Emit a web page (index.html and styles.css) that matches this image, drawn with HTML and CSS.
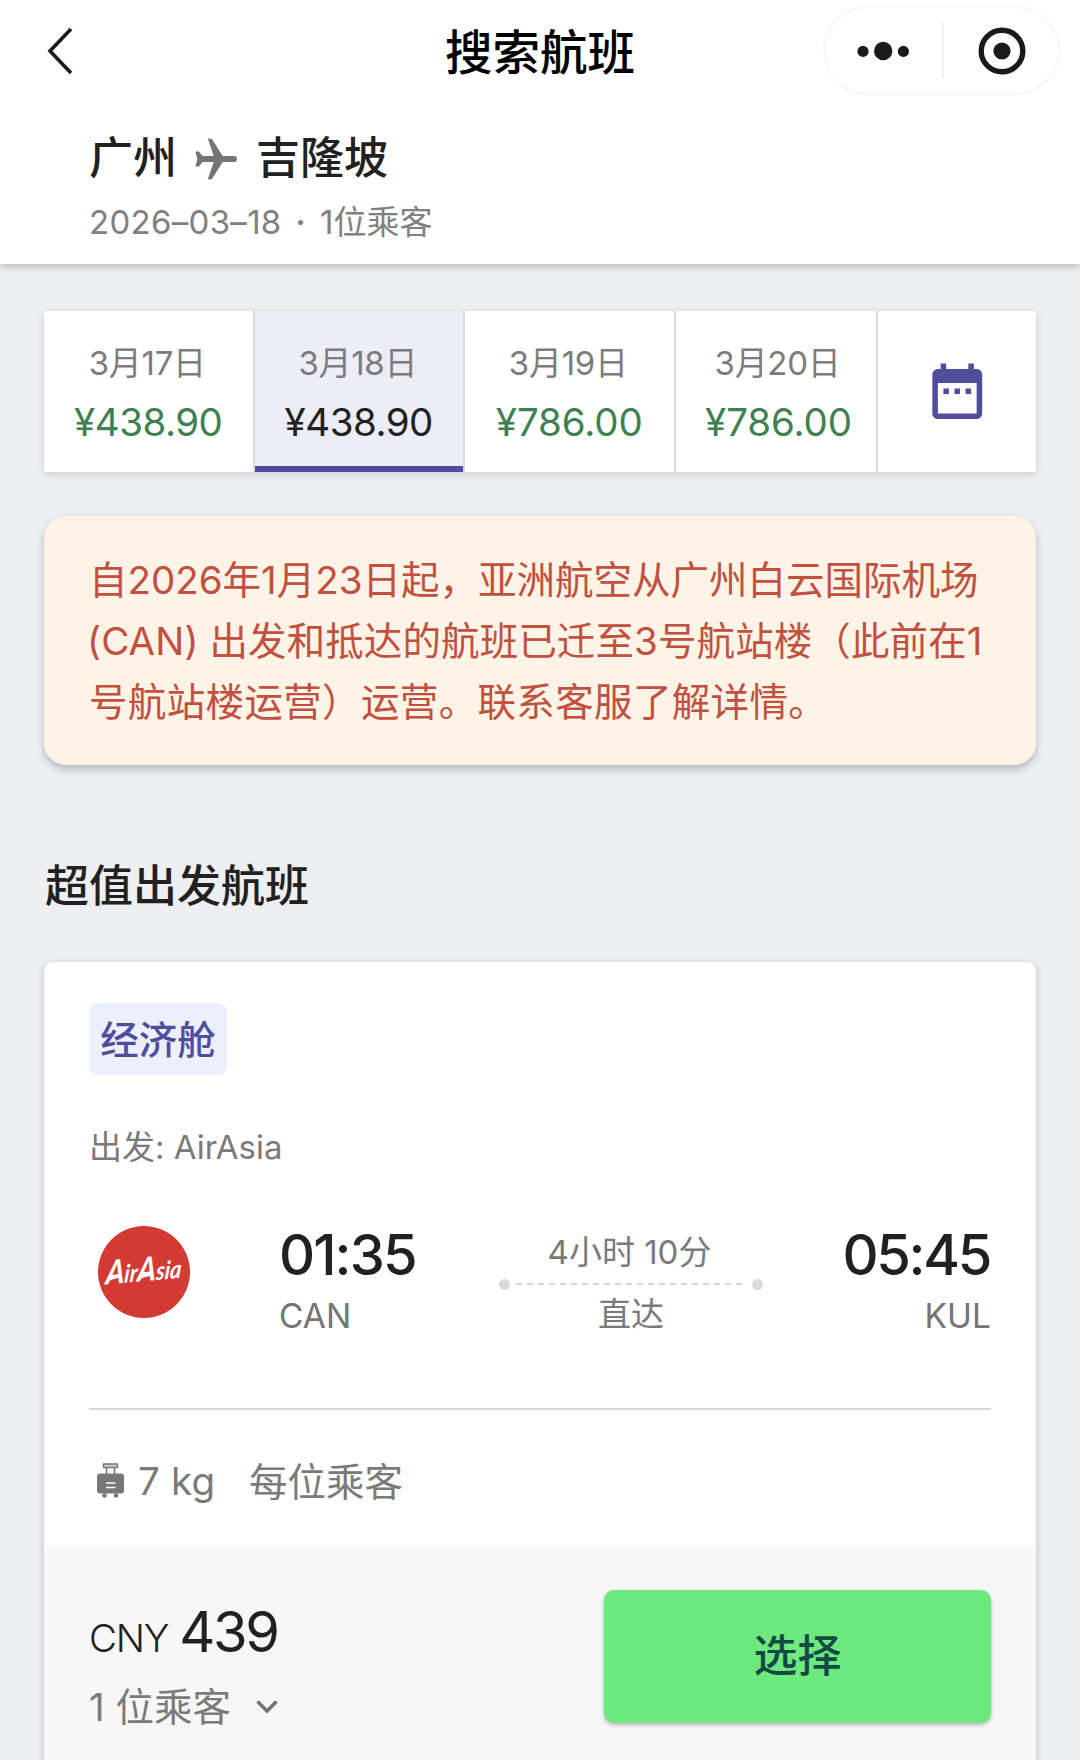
FILE: index.html
```html
<!DOCTYPE html>
<html lang="zh-CN">
<head>
<meta charset="utf-8">
<title>搜索航班</title>
<link rel="stylesheet" href="styles.css">
</head>
<body>
<header class="header">
  <div class="nav">
    <svg class="back" viewBox="0 0 26 48"><path d="M24 2 3 24l21 22" fill="none" stroke="#1a1a1a" stroke-width="3.6"/></svg>
    <h1 class="nav-title">搜索航班</h1>
    <div class="capsule">
      <svg class="more" viewBox="0 0 54 20"><circle cx="7" cy="10.4" r="5.6"/><circle cx="27.200" cy="10" r="9.200"/><circle cx="47.400" cy="10.400" r="5.600"/></svg>
      <i class="capsule-line"></i>
      <svg class="target" viewBox="0 0 48 48"><circle cx="24" cy="24" r="20.800" fill="none" stroke="#1a1a1a" stroke-width="5.400"/><circle cx="24" cy="24" r="8.600"/></svg>
    </div>
  </div>
  <div class="route">
    <span>广州</span>
    <svg class="plane" viewBox="2 2 20 20"><path d="M20.600 10.600H15.200L10 2.400 8.100 2.200 10.900 10.600H5.600L3.900 8.400H2.200L3.100 12 2.200 15.600H3.900L5.600 13.400H10.900L8.100 21.800 10 21.600 15.200 13.400H20.600a1.400 1.400 0 0 0 0-2.800z"/></svg>
    <span>吉隆坡</span>
  </div>
  <div class="meta"><span class="meta-date">2026–03–18</span><span class="meta-dot">·</span><span>1位乘客</span></div>
</header>

<main class="main">
  <div class="dates">
    <div class="date"><span class="day">3月17日</span><span class="price">¥438.90</span></div>
    <div class="date active"><span class="day">3月18日</span><span class="price">¥438.90</span></div>
    <div class="date"><span class="day">3月19日</span><span class="price wide">¥786.00</span></div>
    <div class="date narrow"><span class="day">3月20日</span><span class="price wide">¥786.00</span></div>
    <div class="calendar"><svg viewBox="0 0 24 24"><path d="M9 11H7v2h2v-2zm4 0h-2v2h2v-2zm4 0h-2v2h2v-2zm2-7h-1V2h-2v2H8V2H6v2H5c-1.110 0-1.990.9-1.990 2L3 20c0 1.100.89 2 2 2h14c1.100 0 2-.9 2-2V6c0-1.100-.9-2-2-2zm0 16H5V9h14v11z"/></svg></div>
  </div>

  <div class="notice">
    <p class="l1">自2026年1月23日起，亚洲航空从广州白云国际机场</p>
    <p class="l2">(CAN) 出发和抵达的航班已迁至3号航站楼（此前在1</p>
    <p class="l3">号航站楼运营）运营。联系客服了解详情。</p>
  </div>

  <h2 class="section-title">超值出发航班</h2>

  <article class="card">
    <div class="card-body">
      <span class="cabin">经济舱</span>
      <div class="carrier">出发: AirAsia</div>
      <div class="flight">
        <svg class="logo" viewBox="0 0 92 92"><circle cx="46" cy="46" r="46" fill="#d43a34"/><text x="8" y="55" transform="rotate(-5 46 46) skewX(-10) translate(8 0)" textLength="76" lengthAdjust="spacingAndGlyphs"><tspan class="cap">A</tspan>ir<tspan class="cap">A</tspan>sia</text><path d="M8 57q3-5 11-6M40 54q3-4 11-5" fill="none" stroke="#fff" stroke-width="2.500" stroke-linecap="round"/></svg>
        <div class="stop from"><span class="time">01:35</span><span class="code">CAN</span></div>
        <div class="leg">
          <span class="duration">4小时 10分</span>
          <div class="line"><i class="dot"></i><i class="dash"></i><i class="dot"></i></div>
          <span class="direct">直达</span>
        </div>
        <div class="stop to"><span class="time">05:45</span><span class="code">KUL</span></div>
      </div>
      <div class="baggage">
        <svg class="bag" viewBox="0 0 27 35"><path d="M6.500 1h14v3.500h-14z" fill="#ccc" stroke="#777" stroke-width="1.400"/><path d="M9.500 4.500v7M17.500 4.500v7" stroke="#777" stroke-width="1.600"/><rect y="10.500" width="27" height="20" rx="3"/><path d="M9 20h9.500M9 24.500h9.500" stroke="#fff" stroke-width="1.600"/><circle cx="7.500" cy="32.500" r="2.300"/><circle cx="19" cy="32.500" r="2.300"/></svg>
        <span class="kg">7 kg</span><span class="per">每位乘客</span>
      </div>
    </div>
    <div class="card-foot">
      <div>
        <div class="total"><span class="cur">CNY</span><span class="amount">439</span></div>
        <div class="pax"><span>1 位乘客</span><svg viewBox="0 0 22 14"><path d="M1.500 1.500 11 11l9.500-9.500" fill="none" stroke="#757575" stroke-width="3.600"/></svg></div>
      </div>
      <button class="select">选择</button>
    </div>
  </article>
</main>
</body>
</html>
```
FILE: styles.css
```css
* { box-sizing: border-box; margin: 0; padding: 0; }
body {
  width: 1080px;
  height: 1760px;
  overflow: hidden;
  background: #edeff3;
  color: #212121;
  font-family: Inter, "Noto Sans CJK SC", sans-serif;
  white-space: nowrap;
}
svg { display: block; flex: none; }
.header {
  position: relative;
  height: 264px;
  background: #fff;
  box-shadow: 0 3px 8px rgba(0, 0, 0, .22);
}
.nav {
  height: 122px;
  padding: 6px 20px 0 47px;
  display: grid;
  grid-template-columns: 237px 1fr 237px;
  align-items: start;
}
.back { width: 26px; height: 48px; margin-top: 21px; }
.nav-title {
  line-height: 94px;
  font-size: 47.500px;
  font-weight: 500;
  color: #000;
  text-align: center;
  padding-right: 27px;
}
.capsule {
  width: 237px;
  height: 89px;
  border: 2px solid #f7f7f7;
  border-radius: 45px;
  display: flex;
  align-items: center;
  padding: 0 0 0 30.500px;
}
.capsule svg { fill: #1a1a1a; }
.more { width: 54px; height: 20px; }
.capsule-line { width: 2px; height: 55px; margin: 0 34px 0 32px; background: #eee; }
.target { width: 48px; height: 48px; }
.route {
  height: 72px;
  padding-left: 89px;
  display: flex;
  align-items: center;
  font-size: 44px;
  line-height: 72px;
  font-weight: 500;
}
.plane { width: 42px; height: 42px; margin: 1px 19px 0 18px; fill: #757575; }
.meta {
  padding-left: 89px;
  height: 56px;
  line-height: 56px;
  font-size: 33px;
  color: #808080;
  display: flex;
}
.meta-date { width: 192px; letter-spacing: .3px; }
.meta-dot { width: 39px; text-align: center; font-weight: 600; }
.main { padding: 47px 44px 0; }
.dates {
  display: flex;
  height: 161px;
  background: #fff;
  box-shadow: 0 2px 8px rgba(0, 0, 0, .14);
}
.date {
  width: 210.500px;
  border-right: 2.500px solid #d9dadc;
  padding-top: 26px;
  display: flex;
  flex-direction: column;
  align-items: center;
}
.date.narrow { width: 202px; padding-left: 6px; }
.date.active { background: #ecedf6; box-shadow: inset 0 -6px #504c9c; }
.day { font-size: 33px; line-height: 52px; color: #7c7c7c; letter-spacing: -.3px; margin-left: -2px; }
.price { font-size: 38.500px; line-height: 66px; color: #3e8050; letter-spacing: -.5px; }
.price.wide { letter-spacing: -.1px; }
.active .price { color: #212121; }
.calendar { flex: 1; display: flex; align-items: center; justify-content: center; }
.calendar svg { width: 66.500px; height: 66.500px; fill: #4f4d9c; }
.notice {
  margin-top: 44px;
  height: 249px;
  padding: 34px 45px;
  border-radius: 22px;
  background: #fdf3e6;
  box-shadow: 0 4px 8px rgba(0, 0, 0, .24);
  font-size: 38.500px;
  line-height: 61px;
  color: #c2503e;
}
.l2 { margin-left: -2px; letter-spacing: .1px; }
.l3 { letter-spacing: .35px; }
.section-title {
  margin-top: 85px;
  padding-left: 1px;
  line-height: 72px;
  font-size: 44px;
  font-weight: 500;
}
.card {
  margin-top: 40px;
  border-radius: 9px;
  background: #fff;
  box-shadow: 0 2px 9px rgba(0, 0, 0, .2);
  overflow: hidden;
}
.card-body { height: 584px; padding: 41px 45px 0; }
.cabin {
  display: block;
  width: 138px;
  height: 72px;
  line-height: 74px;
  border-radius: 9px;
  background: #eceffc;
  color: #4f4d9c;
  font-size: 38.500px;
  font-weight: 500;
  text-align: center;
}
.carrier { margin-top: 47px; font-size: 33px; line-height: 50px; color: #7a7a7a; }
.flight {
  display: grid;
  grid-template-columns: 190px 220px 264px 1fr;
  height: 238px;
  border-bottom: 2.500px solid #d6d6d6;
}
.logo { width: 92px; height: 92px; margin: 54px 0 0 9px; }
.logo text { font: italic 700 25px Lato, sans-serif; fill: #fff; }
.logo .cap { font-size: 33px; }
.stop { display: flex; flex-direction: column; padding-top: 48px; }
.stop.to { align-items: flex-end; }
.time { font-size: 56px; line-height: 70px; font-weight: 500; letter-spacing: -1.900px; }
.to .time { letter-spacing: -2.300px; margin-right: 1px; }
.code { font-size: 33.500px; line-height: 53px; color: #757575; }
.leg { display: flex; flex-direction: column; align-items: center; padding-top: 56px; font-size: 33px; line-height: 50px; color: #7a7a7a; }
.duration { line-height: 49px; margin-left: -3px; }
.line { width: 264px; height: 14px; display: flex; align-items: center; justify-content: space-between; }
.dot { width: 11px; height: 11px; border-radius: 50%; background: #d9dadd; }
.dash { width: 231px; height: 2.500px; background: repeating-linear-gradient(90deg, #d6d7da 0 6px, transparent 6px 11px); }
.direct { line-height: 46px; }
.baggage {
  display: flex;
  align-items: center;
  height: 141px;
  padding-left: 8px;
  font-size: 38.500px;
  color: #7a7a7a;
}
.bag { width: 27px; height: 35px; fill: #777; margin-right: 14px; }
.kg { width: 111px; letter-spacing: .2px; }
.per { margin-bottom: 4px; }
.card-foot {
  height: 260px;
  padding: 44px 45px 0;
  background: #f7f7f7;
  display: flex;
  justify-content: space-between;
}
.total { margin-top: 4px; height: 76px; line-height: 76px; display: flex; align-items: baseline; gap: 11px; }
.cur { font-size: 38.500px; font-weight: 350; letter-spacing: -1.200px; }
.amount { font-size: 56px; letter-spacing: -2.400px; }
.pax { display: flex; align-items: center; gap: 25px; font-size: 38.500px; line-height: 60px; margin-top: 7px; color: #7a7a7a; }
.pax svg { width: 22px; height: 14px; }
.select {
  width: 387px;
  height: 133px;
  padding-bottom: 7px;
  border: 0;
  border-radius: 10px;
  background: #6ee97d;
  box-shadow: 0 2px 4px rgba(0, 0, 0, .25);
  color: #134a45;
  font: 500 44px Inter, "Noto Sans CJK SC", sans-serif;
}
```
